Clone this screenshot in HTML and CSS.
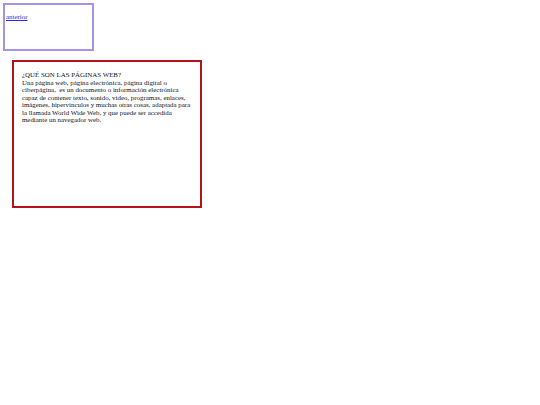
FILE: index.html
```html
<!DOCTYPE html>
<html lang="es">
<head>
<meta charset="utf-8">
<title>Páginas web</title>
<link rel="stylesheet" href="styles.css">
</head>
<body>
<nav class="nav-box">
  <a href="#" class="nav-link">anterior</a>
</nav>
<section class="content-box">
  <p class="text">¿QUÉ SON LAS PÁGINAS WEB?<br>Una página web, página electrónica, página digital o ciberpágina,&nbsp; es un documento o información electrónica capaz de contener texto, sonido, vídeo, programas, enlaces, imágenes, hipervínculos y muchas otras cosas, adaptada para la llamada World Wide Web, y que puede ser accedida mediante un navegador web.</p>
</section>
</body>
</html>
```
FILE: styles.css
```css
html, body {
  margin: 0;
  padding: 0;
  background: #fff;
}
body {
  font-family: "Liberation Serif", "Times New Roman", serif;
  font-size: 6.9px;
  line-height: 7.5px;
  color: #111;
  padding: 3px;
}
.nav-box {
  box-sizing: border-box;
  width: 91px;
  height: 48px;
  border: 2px solid #a593e6;
  padding: 8px 1px 0;
}
.nav-link {
  color: #2a2ae0;
  text-decoration: underline;
}
.content-box {
  box-sizing: border-box;
  width: 190px;
  height: 148px;
  margin: 9px 0 0 9px;
  border: 2px solid #b3121b;
  padding: 9px 8px 9px 8px;
}
.text {
  margin: 0;
}
```
